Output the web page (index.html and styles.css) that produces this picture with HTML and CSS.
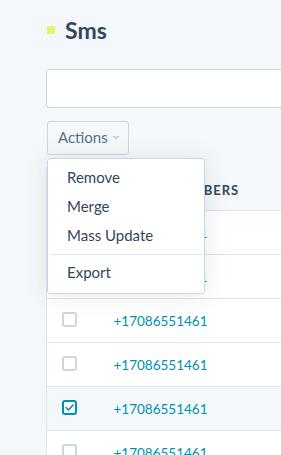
FILE: index.html
```html
<!DOCTYPE html>
<html>
<head>
  <title>Sms</title>
  <link rel="stylesheet" href="styles.css">
</head>
<body>

<div class="page">
  <div class="title-row">
    <span class="title-mark"></span>
    <h1>Sms</h1>
  </div>

  <input type="text" class="search" id="searchBar">

  <div class="actions">
    <button class="actions-btn">Actions <span class="caret"></span></button>
    <ul class="menu">
      <li>Remove</li>
      <li>Merge</li>
      <li>Mass Update</li>
      <li class="divider"></li>
      <li>Export</li>
    </ul>
  </div>

  <table class="records">
    <tr>
      <th class="check-col"></th><th>Phone Numbers</th>
    </tr>
    <tr><td class="check-col"><span class="box"></span></td><td><a href="#">+17086551461</a></td></tr>
    <tr><td class="check-col"><span class="box"></span></td><td><a href="#">+17086551461</a></td></tr>
    <tr><td class="check-col"><span class="box"></span></td><td><a href="#">+17086551461</a></td></tr>
    <tr><td class="check-col"><span class="box"></span></td><td><a href="#">+17086551461</a></td></tr>
    <tr class="selected"><td class="check-col"><span class="box checked"><svg width="9" height="7" viewBox="0 0 9 7"><path d="M1 3.5 L3.5 6 L8 1" fill="none" stroke="#0091ae" stroke-width="1.6" stroke-linecap="round" stroke-linejoin="round"/></svg></span></td><td><a href="#">+17086551461</a></td></tr>
    <tr><td class="check-col"><span class="box"></span></td><td><a href="#">+17086551461</a></td></tr>
  </table>
</div>

</body>
</html>
```

FILE: styles.css
```css
body {
  margin: 0;
  background-color: #f5f8fa;
  font-family: Lato, "Noto Sans", sans-serif;
  color: #33475b;
  overflow: hidden;
}

.page {
  padding: 16px 0 0 46px;
  width: 420px;
}

.title-row {
  display: flex;
  align-items: center;
  height: 28px;
}

.title-mark {
  width: 8px;
  height: 8px;
  margin-left: 1px;
  background-color: #e3f56c;
}

h1 {
  margin: 0 0 0 10px;
  font-size: 23px;
  font-weight: 700;
  color: #33475b;
}

input.search {
  display: block;
  margin-top: 25px;
  width: 360px;
  height: 39px;
  padding: 0 10px;
  box-sizing: border-box;
  border: 1px solid #cbd6e2;
  border-radius: 3px;
  background: #fff;
}

/* Actions dropdown */
.actions {
  position: relative;
  margin-top: 13px;
  margin-left: 1px;
}

.actions-btn {
  display: flex;
  align-items: center;
  width: 82px;
  height: 34px;
  padding: 0 0 3px 10px;
  border: 1px solid #cbd6e2;
  border-radius: 3px;
  background-color: #f5f8fa;
  font-family: inherit;
  font-size: 15px;
  color: #516f90;
}

.caret {
  margin-left: 4px;
  margin-top: 2px;
  border-left: 4px solid transparent;
  border-right: 4px solid transparent;
  border-top: 4px solid #cbd6e2;
}

.menu {
  position: absolute;
  top: 37px;
  left: 0;
  z-index: 2;
  width: 158px;
  margin: 0;
  padding: 5px 0 5px;
  box-sizing: border-box;
  list-style: none;
  background: #fff;
  border: 1px solid #cbd6e2;
  border-radius: 3px;
  box-shadow: 0 1px 24px rgba(45, 62, 80, 0.12);
}

.menu li {
  height: 29px;
  line-height: 27px;
  padding-left: 19px;
  font-size: 15px;
  color: #33475b;
}

.menu li.divider {
  height: 1px;
  margin: 3px 2px 4px;
  padding: 0;
  background-color: #dfe3eb;
}

/* Table */
table.records {
  margin-top: 12px;
  width: 100%;
  border-collapse: collapse;
  background: #fff;
  border-left: 1px solid #dfe3eb;
}

th, td {
  height: 41px;
  padding: 0 0 2px;
  text-align: left;
  border-bottom: 1px solid #dfe3eb;
}

th {
  height: 40px;
  background-color: #f5f8fa;
  font-size: 13px;
  font-weight: 700;
  text-transform: uppercase;
  letter-spacing: 1px;
  padding: 3px 0 0 14px;
}

.check-col {
  width: 53px;
  padding-left: 15px;
  padding-right: 0;
  box-sizing: border-box;
}

td a {
  padding-left: 14px;
  font-size: 13.5px;
  color: #0091ae;
  text-decoration: none;
}

tr.selected td {
  background-color: #f5f8fa;
}

.box {
  display: flex;
  align-items: center;
  justify-content: center;
  width: 15px;
  height: 15px;
  box-sizing: border-box;
  border: 2px solid #cbd6e2;
  border-radius: 3px;
  background: #fff;
}

.box.checked {
  border-color: #0091ae;
}
```
